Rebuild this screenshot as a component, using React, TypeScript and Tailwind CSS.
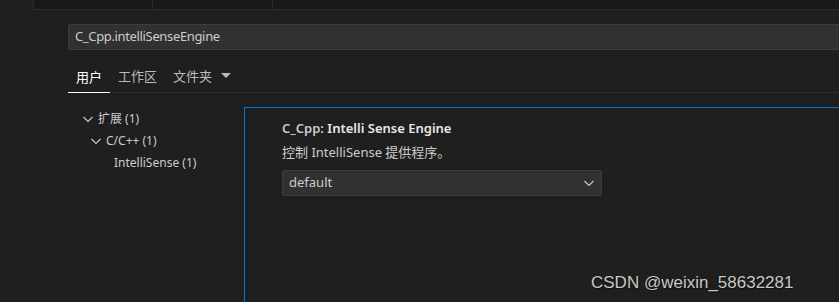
import React from "react";

const font = { fontFamily: '"Noto Sans", "Noto Sans CJK SC", sans-serif' };

function Chevron({ className }: { className?: string }) {
  return (
    <svg className={className} width="16" height="16" viewBox="0 0 16 16" fill="none">
      <path d="M3.5 6 L8 10.5 L12.5 6" stroke="currentColor" strokeWidth="1.1" />
    </svg>
  );
}

export default function App() {
  return (
    <div className="w-[839px] h-[302px] bg-[#1f1f1f] overflow-hidden relative text-[#cccccc]" style={font}>
      {/* top tab strip */}
      <div className="flex h-[10px]">
        <div className="w-[33px] shrink-0" />
        <div className="flex-1 flex bg-[#181818] border-b border-[#2b2b2b]">
          <div className="w-[119px] border-l border-[#2b2b2b]" />
          <div className="w-[120px] border-l border-[#2b2b2b]" />
          <div className="flex-1 border-l border-[#2b2b2b]" />
        </div>
      </div>

      <div className="pl-[68px] pt-[14px]">
        {/* search */}
        <div className="h-[26px] bg-[#313131] border border-[#3c3c3c] rounded-l-[2px] flex items-center pl-[6px] text-[13px] tracking-[-0.35px] text-[#cccccc] w-[800px]">
          C_Cpp.intelliSenseEngine
        </div>

        {/* scope tabs */}
        <div className="mt-[16px] flex items-end h-[27px] border-b border-[#2b2b2b] text-[13px]">
          <div className="w-[42px] h-full flex items-start justify-center border-b-[1px] border-white text-white relative top-[1px]">
            <span className="leading-[20px]">用户</span>
          </div>
          <div className="ml-[8px] h-full flex items-start text-[#bbbbbb]">
            <span className="leading-[20px]">工作区</span>
          </div>
          <div className="ml-[16px] h-full flex items-start text-[#bbbbbb]">
            <span className="leading-[20px]">文件夹</span>
            <svg className="ml-[9px] mt-[7px]" width="10" height="6" viewBox="0 0 10 6">
              <path d="M0 0 H10 L5 5 Z" fill="#bbbbbb" />
            </svg>
          </div>
        </div>

        {/* body */}
        <div className="flex mt-[14px]">
          <div className="w-[176px] shrink-0 text-[12px] text-[#cccccc] pt-[1px]">
            <div className="flex items-center h-[22px] pl-[12px]">
              <Chevron className="text-[#cccccc] mr-[2px]" />
              <span>扩展 (1)</span>
            </div>
            <div className="flex items-center h-[22px] pl-[20px]">
              <Chevron className="text-[#cccccc] mr-[2px]" />
              <span>C/C++ (1)</span>
            </div>
            <div className="flex items-center h-[22px] pl-[46px]">
              <span>IntelliSense (1)</span>
            </div>
          </div>
          <div className="flex-1 border-l border-t border-[#0078d4] h-[200px] pl-[37px] pt-[11px]">
            <div className="text-[13px] font-semibold leading-[18px]">
              <span className="text-[#cccccc]">C_Cpp: </span>
              <span className="text-[#e7e7e7]">Intelli Sense Engine</span>
            </div>
            <div className="text-[13px] leading-[18px] mt-[6px] text-[#cccccc]">控制 IntelliSense 提供程序。</div>
            <div className="mt-[9px] w-[320px] h-[26px] bg-[#313131] border border-[#3c3c3c] rounded-[2px] flex items-center justify-between pl-[6px] pr-[4px] text-[13px] text-[#cccccc]">
              <span>default</span>
              <Chevron className="text-[#cccccc]" />
            </div>
          </div>
        </div>
      </div>

      <div
        className="absolute left-[591px] top-[270px] text-[17px] text-[#c8c8c8]"
        style={{ fontFamily: '"Liberation Sans", Arial, sans-serif', textShadow: "1px 1px 1px rgba(0,0,0,0.6)" }}
      >
        CSDN @weixin_58632281
      </div>
    </div>
  );
}
